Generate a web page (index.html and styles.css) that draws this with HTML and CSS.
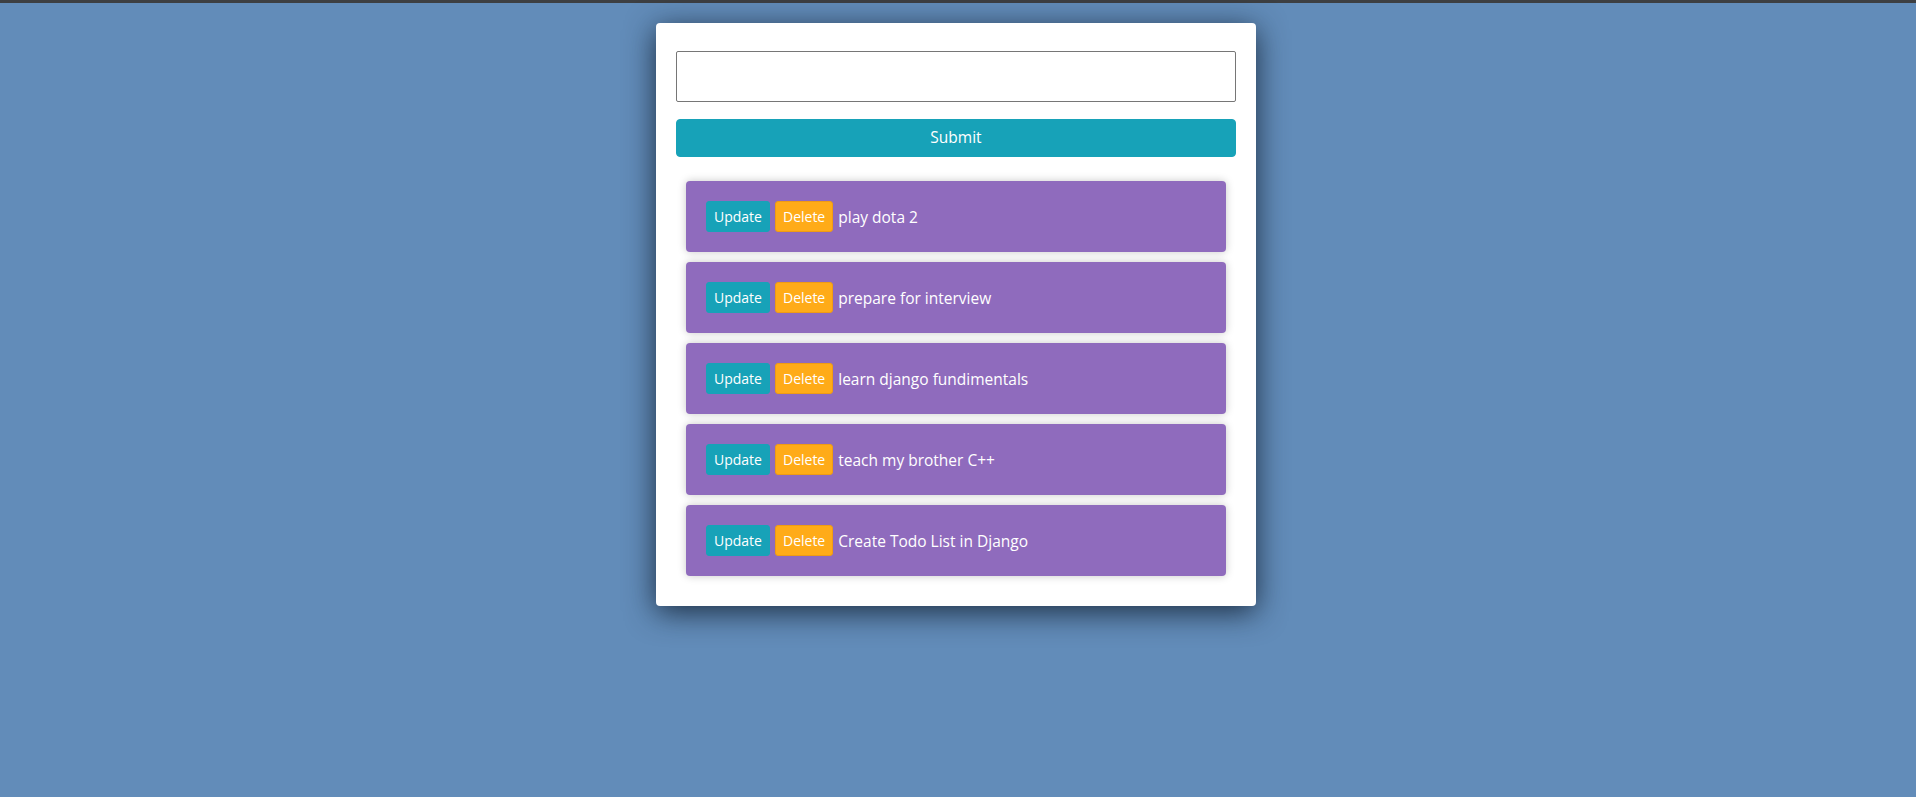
FILE: index.html
```html
<!DOCTYPE html>
<html lang="en">
<head>
<meta charset="utf-8">
<title>Todo List</title>
<link rel="stylesheet" href="styles.css">
</head>
<body>
<div class="topbar"></div>
<div class="card">
  <form class="task-form">
    <input class="task-input" type="text" name="title">
    <button class="submit-btn" type="button">Submit</button>
  </form>
  <div class="task-list">
    <div class="task">
      <button class="btn btn-update" type="button">Update</button>
      <button class="btn btn-delete" type="button">Delete</button>
      <span class="task-title">play dota 2</span>
    </div>
    <div class="task">
      <button class="btn btn-update" type="button">Update</button>
      <button class="btn btn-delete" type="button">Delete</button>
      <span class="task-title">prepare for interview</span>
    </div>
    <div class="task">
      <button class="btn btn-update" type="button">Update</button>
      <button class="btn btn-delete" type="button">Delete</button>
      <span class="task-title">learn django fundimentals</span>
    </div>
    <div class="task">
      <button class="btn btn-update" type="button">Update</button>
      <button class="btn btn-delete" type="button">Delete</button>
      <span class="task-title">teach my brother C++</span>
    </div>
    <div class="task">
      <button class="btn btn-update" type="button">Update</button>
      <button class="btn btn-delete" type="button">Delete</button>
      <span class="task-title">Create Todo List in Django</span>
    </div>
  </div>
</div>
</body>
</html>
```
FILE: styles.css
```css
* {
  box-sizing: border-box;
}

html, body {
  margin: 0;
  padding: 0;
}

body {
  background: #628cb9;
  font-family: "Open Sans", "Noto Sans", "Liberation Sans", sans-serif;
  min-height: 797px;
}

.topbar {
  height: 3px;
  background: #3d3f42;
}

.card {
  width: 600px;
  margin: 20px 0 0 calc(50% - 302px);
  padding: 28px 20px 20px;
  background: #ffffff;
  border-radius: 4px;
  box-shadow: 0 6px 30px rgba(15, 28, 45, 0.85);
}

.task-form {
  display: flex;
  flex-direction: column;
  gap: 17px;
}

.task-input {
  display: block;
  width: 100%;
  height: 51px;
  border: 1px solid #767676;
  border-radius: 2px;
  padding: 4px 8px;
  font-size: 16px;
  font-family: inherit;
  outline: none;
}

.submit-btn {
  display: block;
  width: 100%;
  height: 38px;
  border: 1px solid #17a2b8;
  border-radius: 4px;
  background: #17a2b8;
  color: #ffffff;
  font-family: inherit;
  font-size: 15.5px;
  line-height: 1.5;
  padding: 0;
}

.task-list {
  margin-top: 24px;
  padding: 0 10px;
}

.task {
  display: flex;
  align-items: center;
  gap: 5px;
  height: 71px;
  padding: 20px;
  margin-bottom: 10px;
  background: #8f6bbd;
  border-radius: 4px;
  box-shadow: 0 0 8px rgba(0, 0, 0, 0.22);
}

.btn {
  height: 31px;
  padding: 0 7px;
  border-radius: 3px;
  font-family: inherit;
  font-size: 14px;
  color: #ffffff;
  line-height: 1;
}

.btn-update {
  background: #17a2b8;
  border: 1px solid #17a2b8;
}

.btn-delete {
  background: #ffab18;
  border: 1px solid #ef9b14;
}

.task-title {
  color: #ffffff;
  font-size: 15.5px;
  line-height: 24px;
}
```
